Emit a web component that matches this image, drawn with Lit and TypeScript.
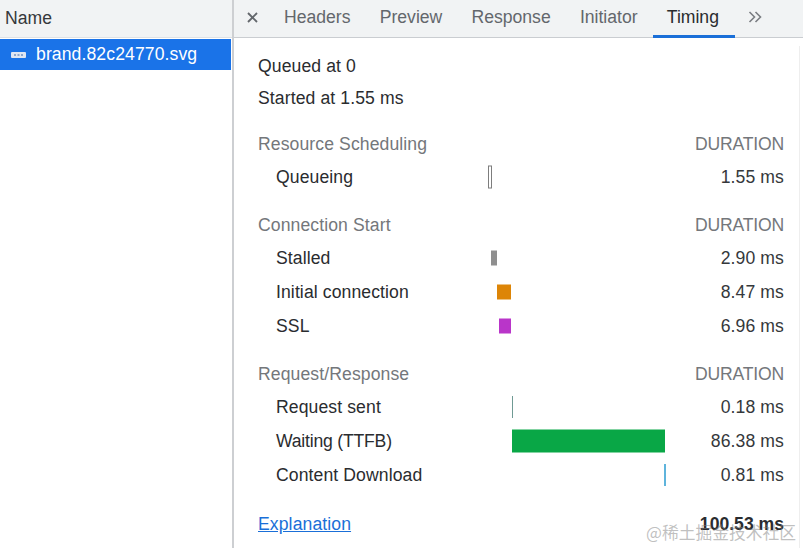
import { LitElement, html, css, svg } from "lit";
import { customElement } from "lit/decorators.js";

interface Row { label: string; dur: string; left: number; width: number; h: number; color: string; outline?: boolean; tight?: boolean }
interface Section { title: string; rows: Row[] }

const SECTIONS: Section[] = [
  { title: "Resource Scheduling", rows: [
    { label: "Queueing", dur: "1.55 ms", left: 0, width: 4, h: 23, color: "#fff", outline: true },
  ]},
  { title: "Connection Start", rows: [
    { label: "Stalled", dur: "2.90 ms", left: 3, width: 6, h: 15, color: "#8f8f8f" },
    { label: "Initial connection", dur: "8.47 ms", left: 8.5, width: 14.5, h: 15, color: "#dd8507" },
    { label: "SSL", dur: "6.96 ms", left: 11, width: 12, h: 15, color: "#b935c9" },
  ]},
  { title: "Request/Response", rows: [
    { label: "Request sent", dur: "0.18 ms", left: 24, width: 1, h: 22, color: "#6f9a94" },
    { label: "Waiting (TTFB)", dur: "86.38 ms", left: 24, width: 152.5, h: 23, color: "#09a746", tight: true },
    { label: "Content Download", dur: "0.81 ms", left: 176, width: 2, h: 22, color: "#5fb4dc" },
  ]},
];

const TABS = ["Headers", "Preview", "Response", "Initiator", "Timing"];

@customElement("app-root")
export class AppRoot extends LitElement {
  static styles = css`
    :host {
      display: flex;
      width: 803px;
      height: 548px;
      overflow: hidden;
      position: relative;
      background: #fff;
      font-family: "Liberation Sans", Arial, sans-serif;
      font-size: 17.6px;
      letter-spacing: 0.1px;
      color: #2a2c2f;
    }
    .left { width: 232px; flex: none; display: flex; flex-direction: column; }
    .left-head {
      height: 37px;
      flex: none;
      background: #f1f3f4;
      border-bottom: 1px solid #dfe1e4;
      padding-left: 5px;
      display: flex;
      align-items: center;
      color: #35383b;
      letter-spacing: 0;
    }
    .file {
      margin-top: 1px;
      height: 31px;
      background: #1a73e8;
      color: #fff;
      display: flex;
      align-items: center;
      padding-left: 11px;
      gap: 10px;
      width: 220px;
    }
    .file svg { display: block; flex: none; }
    .divider { width: 2px; flex: none; background: #cdcfd2; }
    .right { flex: 1; min-width: 0; display: flex; flex-direction: column; }
    .tabs {
      height: 37px;
      flex: none;
      background: #f1f3f4;
      border-bottom: 1px solid #cacdd1;
      display: flex;
      align-items: stretch;
      padding-left: 12px;
      color: #63676c;
      letter-spacing: 0;
    }
    .close { width: 24px; flex: none; display: flex; align-items: center; padding-bottom: 3px; }
    .tab { padding: 0 14px; display: flex; align-items: center; margin-right: 1.2px; padding-bottom: 3px; }
    .tab.active {
      color: #2a2c2f;
      padding: 0 16px 0 14px;
      border-bottom: 3px solid #1a6fd8;
      margin-bottom: -1px;
      height: 35px;
      margin-right: 0;
    }
    .more { display: flex; align-items: center; margin-left: 13.5px; padding-bottom: 3px; }
    .body { flex: 1; display: flex; min-height: 0; }
    .panel { flex: 1; min-width: 0; padding: 12px 15px 0 24px; }
    .gutter { width: 3px; flex: none; margin-top: 8px; border-left: 1px solid #eeeeee; }
    .line { height: 32px; display: flex; align-items: center; }
    .sec { margin-top: 16px; }
    .sec.first { margin-top: 15px; }
    .sec-head {
      height: 31px;
      display: flex;
      align-items: center;
      justify-content: space-between;
      color: #74777b;
    }
    .sec-head .cap { letter-spacing: -0.2px; }
    .row {
      height: 34px;
      display: grid;
      grid-template-columns: 212px 178px 1fr;
      align-items: center;
      padding-left: 18px;
    }
    .row .tight { letter-spacing: -0.2px; }
    .track { position: relative; height: 100%; }
    .bar { position: absolute; top: 50%; transform: translateY(-50%); box-sizing: border-box; }
    .bar.outline { border: 1px solid #7d7d7d; }
    .dur { text-align: right; color: #35383b; }
    .total { margin-top: 16px; height: 32px; display: flex; align-items: center; justify-content: space-between; }
    a { color: #1a6fd8; text-decoration: underline; }
    b { font-weight: 700; color: #2a2c2f; letter-spacing: 0; }
    .mark {
      position: absolute;
      left: 646px;
      top: 520px;
      font-family: "Noto Sans CJK SC", sans-serif;
      font-size: 16.8px;
      letter-spacing: 0;
      line-height: 24px;
      white-space: nowrap;
      color: rgba(130, 130, 130, 0.5);
    }
  `;

  render() {
    return html`
      <div class="left">
        <div class="left-head">Name</div>
        <div class="file">
          <svg width="15" height="6" viewBox="0 0 15 6">
            <rect width="15" height="6" rx="1" fill="#dfe6f2"></rect>
            ${[3, 6.5, 10].map((x) => svg`<rect x=${x} y="2" width="2" height="2" fill="#8ea6cc"></rect>`)}
          </svg>
          brand.82c24770.svg
        </div>
      </div>
      <div class="divider"></div>
      <div class="right">
        <div class="tabs">
          <div class="close">
            <svg width="13" height="13" viewBox="0 0 13 13">
              <path d="M2 2 L11 11 M11 2 L2 11" stroke="#63676c" stroke-width="1.9" fill="none"></path>
            </svg>
          </div>
          ${TABS.map((t) => html`<div class="tab ${t === "Timing" ? "active" : ""}">${t}</div>`)}
          <div class="more">
            <svg width="14" height="12" viewBox="0 0 14 12">
              <path d="M1.5 1 L6.5 6 L1.5 11 M7.5 1 L12.5 6 L7.5 11" stroke="#7a7d82" stroke-width="1.6" fill="none"></path>
            </svg>
          </div>
        </div>
        <div class="body">
          <div class="panel">
            <div class="line">Queued at 0</div>
            <div class="line">Started at 1.55 ms</div>
            ${SECTIONS.map((s, i) => html`
              <div class="sec ${i === 0 ? "first" : ""}">
                <div class="sec-head"><span>${s.title}</span><span class="cap">DURATION</span></div>
                ${s.rows.map((r) => html`
                  <div class="row">
                    <span class=${r.tight ? "tight" : ""}>${r.label}</span>
                    <div class="track">
                      <div class="bar ${r.outline ? "outline" : ""}"
                        style="left:${r.left}px;width:${r.width}px;height:${r.h}px;background:${r.color}"></div>
                    </div>
                    <span class="dur">${r.dur}</span>
                  </div>
                `)}
              </div>
            `)}
            <div class="total"><a>Explanation</a><b>100.53 ms</b></div>
          </div>
          <div class="gutter"></div>
        </div>
      </div>
      <div class="mark">@稀土掘金技术社区</div>
    `;
  }
}
